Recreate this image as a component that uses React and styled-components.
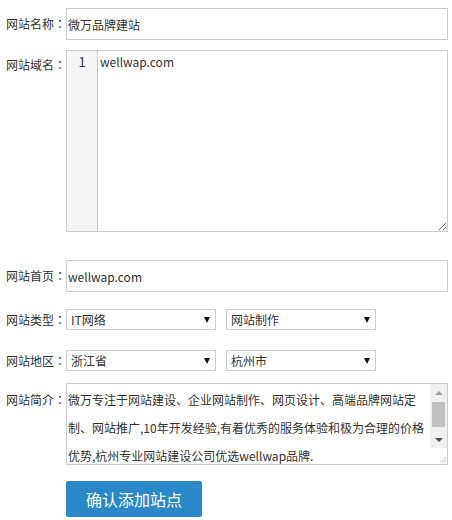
import React, { useState } from 'react';
import styled, { createGlobalStyle } from 'styled-components';

const GlobalStyle = createGlobalStyle`
  html, body {
    margin: 0;
    padding: 0;
    background: #fff;
  }
  body {
    font-family: "Noto Sans CJK SC", "Liberation Sans", sans-serif;
    font-size: 12px;
    color: #333;
  }
`;

const Form = styled.form`
  padding: 8px 4px 0 6px;
  width: 442px;
`;

const Row = styled.div`
  display: flex;
  align-items: ${props => props.align || 'center'};
  margin-bottom: ${props => props.gap || 10}px;
`;

const Label = styled.label`
  width: 60px;
  flex-shrink: 0;
  font-size: 12px;
  line-height: 16px;
  color: #333;
  padding-top: ${props => props.offset || 0}px;
  white-space: nowrap;
`;

// centred full-width colon, as in the original font
const Colon = styled.span`
  font-family: "Noto Sans CJK TC", sans-serif;
`;

const TextInput = styled.input`
  flex: 1;
  height: 32px;
  box-sizing: border-box;
  border: 1px solid #ccc;
  padding: 0 1px;
  font-family: inherit;
  font-size: 12px;
  color: #333;
  outline: none;
`;

const CodeBox = styled.div`
  flex: 1;
  display: flex;
  height: 182px;
  box-sizing: border-box;
  border: 1px solid #ccc;
`;

const Gutter = styled.div`
  width: 30px;
  flex-shrink: 0;
  background: #f5f5f5;
  border-right: 1px solid #ccc;
  text-align: center;
  font-size: 13px;
  line-height: 20px;
  padding-top: 1px;
  color: #333;
`;

const CodeArea = styled.textarea`
  flex: 1;
  border: none;
  outline: none;
  padding: 1px 2px;
  font-family: inherit;
  font-size: 12px;
  line-height: 20px;
  color: #333;
  resize: both;
`;

const SelectWrap = styled.div`
  position: relative;
  width: 150px;
  height: 21px;
  margin-right: 10px;
`;

const Select = styled.select`
  appearance: none;
  width: 100%;
  height: 100%;
  box-sizing: border-box;
  border: 1px solid #ccc;
  border-radius: 0;
  background: #fff;
  padding: 0 0 0 4px;
  font-family: inherit;
  font-size: 12px;
  color: #333;
  outline: none;
`;

const Arrow = styled.span`
  position: absolute;
  right: 6px;
  top: 8px;
  width: 0;
  height: 0;
  border-left: 3.5px solid transparent;
  border-right: 3.5px solid transparent;
  border-top: 6px solid #111;
  pointer-events: none;
`;

const IntroBox = styled.div`
  flex: 1;
  display: flex;
  height: 82px;
  box-sizing: border-box;
  border: 1px solid #ccc;
`;

const IntroArea = styled.textarea`
  flex: 1;
  min-width: 0;
  border: none;
  padding: 2px 1px;
  font-family: inherit;
  font-size: 12px;
  line-height: 28px;
  color: #333;
  outline: none;
  overflow: hidden;
  resize: none;
`;

const Rail = styled.div`
  width: 17px;
  flex-shrink: 0;
  display: flex;
  flex-direction: column;
`;

const RailButton = styled.div`
  height: 17px;
  flex-shrink: 0;
  background: #f0f0f0;
  display: flex;
  align-items: center;
  justify-content: center;

  &::after {
    content: '';
    width: 0;
    height: 0;
    border-left: 4px solid transparent;
    border-right: 4px solid transparent;
    ${props => props.down
      ? 'border-top: 4px solid #505050;'
      : 'border-bottom: 4px solid #a3a3a3;'}
  }
`;

const Track = styled.div`
  flex: 1;
  background: #f0f0f0;
  padding: 1px 2px 0;
`;

const Thumb = styled.div`
  height: 25px;
  background: #c1c1c1;
`;

const Corner = styled.div`
  height: 16px;
  flex-shrink: 0;
  background: #fff;
  display: flex;
  align-items: flex-end;
  justify-content: flex-end;
`;

const Grip = () => (
  <svg width="10" height="10" viewBox="0 0 10 10">
    <path d="M9 3 L3 9 M9 6 L6 9" stroke="#999" strokeWidth="1" strokeDasharray="1 1" />
  </svg>
);

const Actions = styled.div`
  padding-left: 60px;
`;

const Submit = styled.button`
  width: 136px;
  height: 36px;
  border: none;
  border-radius: 2px;
  background: #2a88c8;
  color: #fff;
  font-family: inherit;
  font-size: 16px;
  cursor: pointer;
`;

const Dropdown = ({ value, options }) => (
  <SelectWrap>
    <Select defaultValue={value}>
      {options.map(o => <option key={o}>{o}</option>)}
    </Select>
    <Arrow />
  </SelectWrap>
);

const FieldLabel = ({ text, offset }) => (
  <Label offset={offset}>{text}<Colon>：</Colon></Label>
);

const intro = '微万专注于网站建设、企业网站制作、网页设计、高端品牌网站定制、网站推广,10年开发经验,有着优秀的服务体验和极为合理的价格优势,杭州专业网站建设公司优选wellwap品牌.';

const App = () => {
  const [name, setName] = useState('微万品牌建站');
  const [home, setHome] = useState('wellwap.com');

  return (
    <Form onSubmit={e => e.preventDefault()}>
      <GlobalStyle />
      <Row>
        <FieldLabel text="网站名称" />
        <TextInput value={name} onChange={e => setName(e.target.value)} />
      </Row>
      <Row align="flex-start" gap={28}>
        <FieldLabel text="网站域名" offset={7} />
        <CodeBox>
          <Gutter>1</Gutter>
          <CodeArea defaultValue="wellwap.com" spellCheck={false} />
        </CodeBox>
      </Row>
      <Row gap={17}>
        <FieldLabel text="网站首页" />
        <TextInput value={home} onChange={e => setHome(e.target.value)} />
      </Row>
      <Row gap={20}>
        <FieldLabel text="网站类型" />
        <Dropdown value="IT网络" options={['IT网络', '餐饮美食', '教育培训']} />
        <Dropdown value="网站制作" options={['网站制作', '网络推广', 'APP开发']} />
      </Row>
      <Row gap={12}>
        <FieldLabel text="网站地区" />
        <Dropdown value="浙江省" options={['浙江省', '江苏省', '上海市']} />
        <Dropdown value="杭州市" options={['杭州市', '宁波市', '温州市']} />
      </Row>
      <Row align="flex-start" gap={16}>
        <FieldLabel text="网站简介" offset={9} />
        <IntroBox>
          <IntroArea defaultValue={intro} spellCheck={false} />
          <Rail>
            <RailButton />
            <Track><Thumb /></Track>
            <RailButton down />
            <Corner><Grip /></Corner>
          </Rail>
        </IntroBox>
      </Row>
      <Actions>
        <Submit type="submit">确认添加站点</Submit>
      </Actions>
    </Form>
  );
};

export default App;
